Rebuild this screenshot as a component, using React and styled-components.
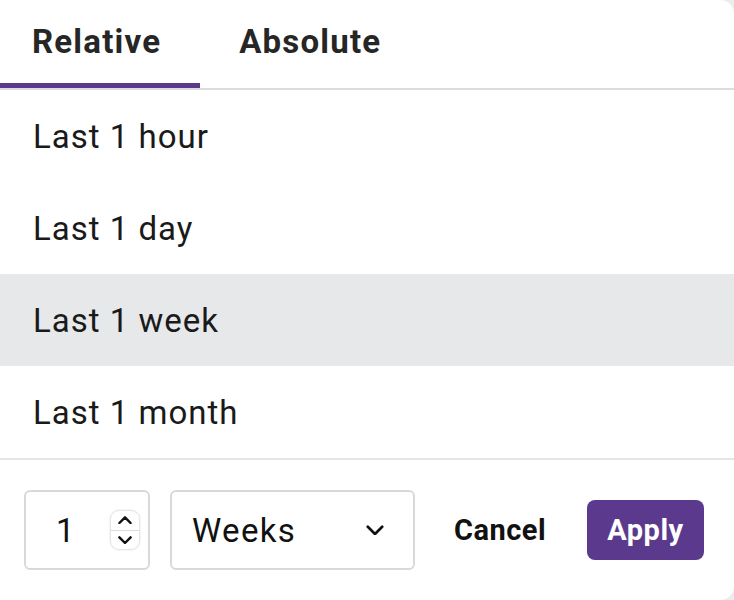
import React, { useState } from "react";
import styled, { createGlobalStyle } from "styled-components";

const Global = createGlobalStyle`
  html, body { margin: 0; padding: 0; background: #ececec; }
  body { font-family: Roboto, "Noto Sans", sans-serif; }
  * { box-sizing: border-box; }
`;

const Card = styled.div`
  width: 734px;
  height: 600px;
  background: #fff;
  border-radius: 0 14px 14px 0;
  display: flex;
  flex-direction: column;
  overflow: hidden;
  color: #222;
`;

const TabBar = styled.div`
  display: flex;
  height: 90px;
  border-bottom: 2px solid #dcdcdc;
`;

const Tab = styled.button`
  border: none;
  background: none;
  font-family: Roboto, sans-serif;
  font-weight: 700;
  font-size: 33px;
  letter-spacing: 1.2px;
  color: #262626;
  padding: 0 39px 0 ${(p) => (p.$first ? "32px" : "39px")};
  height: 88px;
  display: flex;
  align-items: center;
  padding-bottom: 1px;
  border-bottom: 5px solid ${(p) => (p.$active ? "#5b3a8d" : "transparent")};
  cursor: pointer;
`;

const List = styled.div`
  display: flex;
  flex-direction: column;
  border-bottom: 2px solid #e6e6e6;
`;

const Item = styled.div`
  height: 92px;
  display: flex;
  align-items: center;
  padding-left: 33px;
  font-size: 33px;
  letter-spacing: 1px;
  color: #1a1a1a;
  background: ${(p) => (p.$selected ? "#e7e8ea" : "transparent")};
`;

const Footer = styled.div`
  flex: 1;
  display: flex;
  align-items: center;
  padding: 0 30px 0 24px;
`;

const NumberBox = styled.div`
  width: 126px;
  height: 80px;
  border: 2px solid #d9d9d9;
  border-radius: 6px;
  display: flex;
  align-items: center;
  justify-content: space-between;
  padding: 0 8px 0 30px;
  font-size: 33px;
  color: #111;
`;

const Spinner = styled.div`
  width: 30px;
  height: 40px;
  border-radius: 9px;
  border: 1px solid #e4e4e4;
  box-shadow: 0 0 2px rgba(0,0,0,0.12);
  display: flex;
  flex-direction: column;
  overflow: hidden;
`;

const SpinHalf = styled.div`
  flex: 1;
  display: flex;
  align-items: center;
  justify-content: center;
  & + & { border-top: 1px solid #dcdcdc; }
`;

const SelectBox = styled.div`
  width: 245px;
  height: 80px;
  margin-left: 20px;
  border: 2px solid #d9d9d9;
  border-radius: 6px;
  display: flex;
  align-items: center;
  justify-content: space-between;
  padding: 0 29px 0 20px;
  font-size: 33px;
  letter-spacing: 1.3px;
  color: #111;
`;

const CancelButton = styled.button`
  border: none;
  background: none;
  font-family: Roboto, sans-serif;
  font-weight: 700;
  font-size: 29px;
  letter-spacing: 0.5px;
  color: #111;
  margin-left: 39px;
  padding: 0;
  cursor: pointer;
`;

const ApplyButton = styled.button`
  border: none;
  background: #5b3a8d;
  color: #fff;
  font-family: Roboto, sans-serif;
  font-weight: 700;
  font-size: 29px;
  letter-spacing: 0.5px;
  width: 117px;
  height: 60px;
  border-radius: 8px;
  margin-left: auto;
  cursor: pointer;
`;

const Chevron = ({ size = 18, dir = "down", stroke = 3 }) => (
  <svg width={size} height={size * 0.6} viewBox="0 0 20 12" fill="none">
    <path
      d={dir === "down" ? "M2 2 L10 10 L18 2" : "M2 10 L10 2 L18 10"}
      stroke="#111"
      strokeWidth={stroke}
      strokeLinecap="round"
      strokeLinejoin="round"
    />
  </svg>
);

export default function App() {
  const [tab, setTab] = useState("relative");
  const items = ["Last 1 hour", "Last 1 day", "Last 1 week", "Last 1 month"];
  return (
    <>
      <Global />
      <Card>
        <TabBar>
          <Tab $first $active={tab === "relative"} onClick={() => setTab("relative")}>
            Relative
          </Tab>
          <Tab $active={tab === "absolute"} onClick={() => setTab("absolute")}>
            Absolute
          </Tab>
        </TabBar>
        <List>
          {items.map((t) => (
            <Item key={t} $selected={t === "Last 1 week"}>
              {t}
            </Item>
          ))}
        </List>
        <Footer>
          <NumberBox>
            <span>1</span>
            <Spinner>
              <SpinHalf>
                <Chevron size={14} dir="up" stroke={3.5} />
              </SpinHalf>
              <SpinHalf>
                <Chevron size={14} dir="down" stroke={3.5} />
              </SpinHalf>
            </Spinner>
          </NumberBox>
          <SelectBox>
            <span>Weeks</span>
            <Chevron size={18} dir="down" stroke={3} />
          </SelectBox>
          <CancelButton>Cancel</CancelButton>
          <ApplyButton>Apply</ApplyButton>
        </Footer>
      </Card>
    </>
  );
}
